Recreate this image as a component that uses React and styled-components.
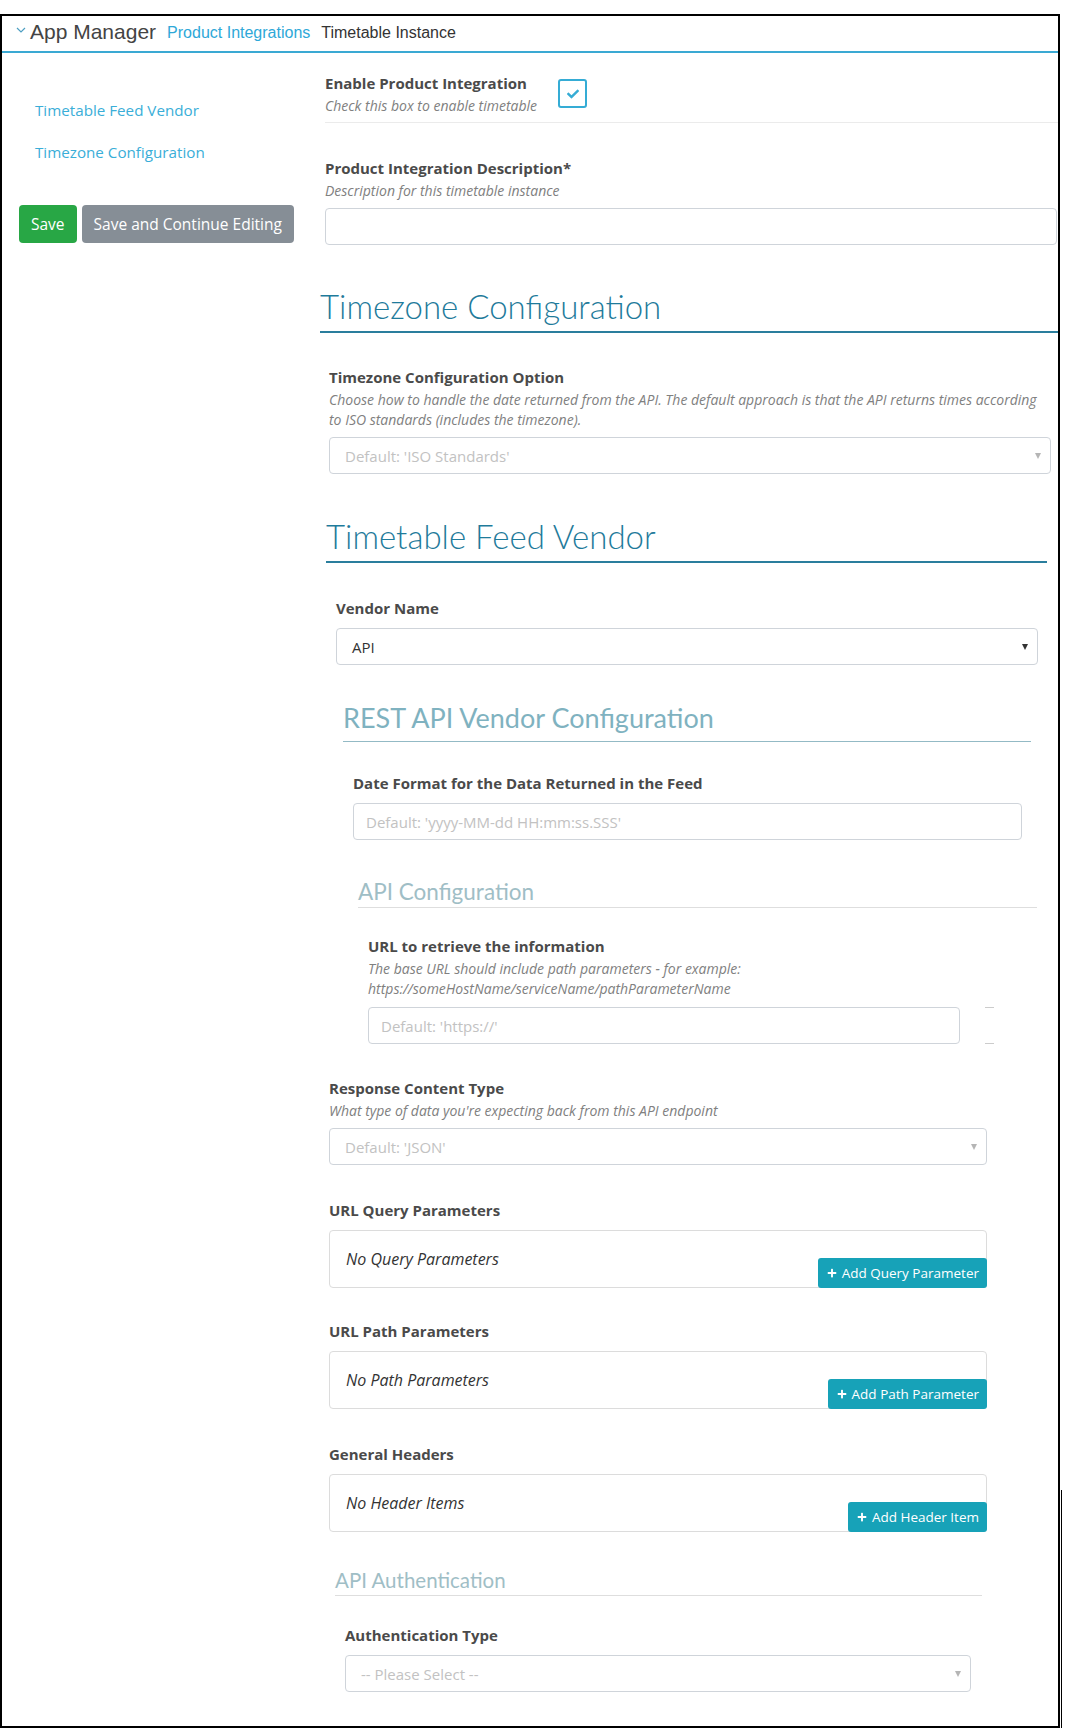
import React from 'react';
import styled, { createGlobalStyle } from 'styled-components';
import { FaPlus, FaCheck } from 'react-icons/fa';

const Global = createGlobalStyle`
  html, body { margin: 0; padding: 0; background: #fff; }
  body { font-family: "Open Sans", "Noto Sans", sans-serif; color: #4a4a4a; }
  * { box-sizing: border-box; }
`;

const Frame = styled.div`
  position: relative;
  margin-top: 14px;
  width: 1060px;
  height: 1714px;
  border: 2px solid #000;
  display: flex;
  flex-direction: column;
  &::after {
    content: '';
    position: absolute;
    right: -4px;
    bottom: -2px;
    width: 1px;
    height: 238px;
    background: #000;
  }
`;

const Header = styled.header`
  height: 37px;
  flex: none;
  border-bottom: 2px solid #3aa9d3;
  display: flex;
  align-items: center;
  padding: 0 0 4px 14px;
  font-family: "Liberation Sans", Arial, sans-serif;
`;

const Chevron = styled.svg`
  width: 10px;
  height: 8px;
  margin-top: -4px;
`;

const AppTitle = styled.span`
  font-size: 21px;
  color: #444;
  margin-left: 4px;
`;

const Crumb = styled.span`
  font-size: 16px;
  color: ${p => (p.$link ? '#2ea8d8' : '#333')};
  margin-left: 11px;
  margin-top: 2px;
`;

const Body = styled.div`
  display: flex;
  flex: 1;
`;

const Sidebar = styled.aside`
  width: 323px;
  flex: none;
  padding: 46px 0 0 17px;
  display: flex;
  flex-direction: column;
`;

const NavLink = styled.a`
  display: block;
  margin-left: 16px;
  font-size: 15.2px;
  line-height: 22px;
  color: #3aaed8;
  text-decoration: none;
  & + & { margin-top: 20px; }
`;

const ButtonRow = styled.div`
  display: flex;
  gap: 5px;
  margin-top: 42px;
`;

const Btn = styled.button`
  height: 38px;
  padding: 0 ${p => (p.$variant === 'success' ? 12 : 12)}px;
  border: none;
  border-radius: 4px;
  color: #fff;
  font-family: inherit;
  font-size: 15.5px;
  background: ${p => (p.$variant === 'success' ? '#28a745' : '#868e96')};
`;

const Main = styled.main`
  flex: 1;
  min-width: 0;
  padding-top: 18px;
  display: flex;
  flex-direction: column;
`;

const ToggleRow = styled.div`
  display: flex;
  align-items: center;
  gap: 21px;
`;

const Checkbox = styled.span`
  width: 29px;
  height: 29px;
  border: 2px solid #35acd5;
  border-radius: 3px;
  display: flex;
  align-items: center;
  justify-content: center;
  color: #35acd5;
`;

const Separator = styled.hr`
  margin: 6px 0 0 0;
  border: none;
  border-top: 1px solid #ebebeb;
`;

const Field = styled.div`
  margin: ${p => p.$t}px ${p => p.$r || 0}px 0 ${p => p.$l || 0}px;
`;

const Label = styled.div`
  font-size: 15px;
  font-weight: 700;
  line-height: 24px;
  color: #4a4a4a;
  margin-bottom: ${p => (p.$hint ? 0 : 8)}px;
`;

const Hint = styled.div`
  font-size: 14px;
  font-style: italic;
  line-height: 20px;
  color: #808080;
  margin-top: 1px;
  margin-bottom: ${p => (p.$mb ?? 8)}px;
`;

const TextInput = styled.input`
  display: block;
  width: 100%;
  height: 37px;
  border: 1px solid #cfd4da;
  border-radius: 4px;
  padding: 0 12px;
  font-family: inherit;
  font-size: 15px;
  color: #333;
  background: #fff;
  &::placeholder { color: #c2c2c2; }
`;

const Select = styled.div`
  height: 37px;
  border: 1px solid #cfd4da;
  border-radius: 4px;
  padding: 0 9px 0 15px;
  display: flex;
  align-items: center;
  justify-content: space-between;
  font-size: 15px;
  color: ${p => (p.$filled ? '#333' : '#c2c2c2')};
`;

const Caret = styled.span`
  width: 0;
  height: 0;
  border-left: 3px solid transparent;
  border-right: 3px solid transparent;
  border-top: 6px solid ${p => (p.$dark ? '#333' : '#b5b5b5')};
`;

const InputRow = styled.div`
  display: flex;
  align-items: stretch;
`;

const Ghost = styled.span`
  flex: none;
  width: 9px;
  margin-left: 25px;
  border-top: 1px solid #ccc;
  border-bottom: 1px solid #ccc;
`;

const Heading = styled.h2`
  margin: ${p => p.$t}px ${p => p.$r || 0}px 0 ${p => p.$l || 0}px;
  font-family: Lato, "Open Sans", sans-serif;
`;

const H2 = styled(Heading)`
  font-size: 33px;
  font-weight: 300;
  line-height: 38px;
  color: #1f7b9b;
  padding-bottom: 6px;
  border-bottom: 2px solid #2a7e9d;
`;

const H3 = styled(Heading).attrs({ as: 'h3' })`
  font-size: 27px;
  font-weight: 400;
  line-height: 32px;
  color: #7fb2c0;
  padding-bottom: 7px;
  border-bottom: 1px solid #93bac5;
`;

const H4 = styled(Heading).attrs({ as: 'h4' })`
  font-size: ${p => p.$size || 22}px;
  font-weight: 400;
  line-height: 28px;
  color: #9fbec6;
  padding-bottom: 1px;
  border-bottom: 1px solid #dedede;
`;

const ParamBox = styled.div`
  height: 58px;
  border: 1px solid #dcdcdc;
  border-radius: 4px;
  display: flex;
  justify-content: space-between;
`;

const Empty = styled.span`
  align-self: center;
  padding-left: 16px;
  font-size: 16px;
  font-style: italic;
  color: #333;
`;

const AddButton = styled.button`
  align-self: flex-end;
  height: 30px;
  margin: 0 -1px -1px 0;
  padding: 0 8px 0 9px;
  border: none;
  border-radius: 3px;
  background: #17a2b8;
  color: #fff;
  font-family: inherit;
  font-size: 13.5px;
  display: flex;
  align-items: center;
  gap: 5px;
`;

const Param = ({ t, label, empty, action }) => (
  <Field $t={t} $l={4} $r={71}>
    <Label>{label}</Label>
    <ParamBox>
      <Empty>{empty}</Empty>
      <AddButton>
        <FaPlus size={10} />
        {action}
      </AddButton>
    </ParamBox>
  </Field>
);

export default function App() {
  return (
    <>
      <Global />
      <Frame>
        <Header>
          <Chevron viewBox="0 0 10 8">
            <polyline points="1,2 5,6 9,2" fill="none" stroke="#4e9fc2" strokeWidth="1.2" />
          </Chevron>
          <AppTitle>App Manager</AppTitle>
          <Crumb $link>Product Integrations</Crumb>
          <Crumb>Timetable Instance</Crumb>
        </Header>
        <Body>
          <Sidebar>
            <NavLink>Timetable Feed Vendor</NavLink>
            <NavLink>Timezone Configuration</NavLink>
            <ButtonRow>
              <Btn $variant="success">Save</Btn>
              <Btn>Save and Continue Editing</Btn>
            </ButtonRow>
          </Sidebar>
          <Main>
            <ToggleRow>
              <div>
                <Label $hint>Enable Product Integration</Label>
                <Hint $mb={0}>Check this box to enable timetable</Hint>
              </div>
              <Checkbox>
                <FaCheck size={12} />
              </Checkbox>
            </ToggleRow>
            <Separator />
            <Field $t={33} $r={1}>
              <Label $hint>Product Integration Description*</Label>
              <Hint $mb={7}>Description for this timetable instance</Hint>
              <TextInput />
            </Field>

            <H2 $t={42} $l={-5}>Timezone Configuration</H2>
            <Field $t={32} $l={4} $r={7}>
              <Label $hint>Timezone Configuration Option</Label>
              <Hint $mb={7}>
                Choose how to handle the date returned from the API. The default approach is that the API returns times according to ISO standards (includes the timezone).
              </Hint>
              <Select>
                Default: 'ISO Standards'
                <Caret />
              </Select>
            </Field>

            <H2 $t={43} $l={1} $r={11}>Timetable Feed Vendor</H2>
            <Field $t={33} $l={11} $r={20}>
              <Label>Vendor Name</Label>
              <Select $filled>
                API
                <Caret $dark />
              </Select>
            </Field>

            <H3 $t={37} $l={18} $r={27}>REST API Vendor Configuration</H3>
            <Field $t={29} $l={28} $r={36}>
              <Label>Date Format for the Data Returned in the Feed</Label>
              <TextInput placeholder="Default: 'yyyy-MM-dd HH:mm:ss.SSS'" />
            </Field>

            <H4 $t={38} $l={33} $r={21} $size={22.5}>API Configuration</H4>
            <Field $t={26} $l={43} $r={64}>
              <Label $hint>URL to retrieve the information</Label>
              <Hint $mb={8}>
                The base URL should include path parameters - for example:
                <br />
                https://someHostName/serviceName/pathParameterName
              </Hint>
              <InputRow>
                <TextInput placeholder="Default: 'https://'" />
                <Ghost />
              </InputRow>
            </Field>

            <Field $t={32} $l={4} $r={71}>
              <Label $hint>Response Content Type</Label>
              <Hint $mb={7}>What type of data you're expecting back from this API endpoint</Hint>
              <Select>
                Default: 'JSON'
                <Caret />
              </Select>
            </Field>

            <Param t={33} label="URL Query Parameters" empty="No Query Parameters" action="Add Query Parameter" />
            <Param t={31} label="URL Path Parameters" empty="No Path Parameters" action="Add Path Parameter" />
            <Param t={33} label="General Headers" empty="No Header Items" action="Add Header Item" />

            <H4 $t={34} $l={10} $r={76} $size={20.5}>API Authentication</H4>
            <Field $t={27} $l={20} $r={87}>
              <Label>Authentication Type</Label>
              <Select>
                -- Please Select --
                <Caret />
              </Select>
            </Field>
          </Main>
        </Body>
      </Frame>
    </>
  );
}
